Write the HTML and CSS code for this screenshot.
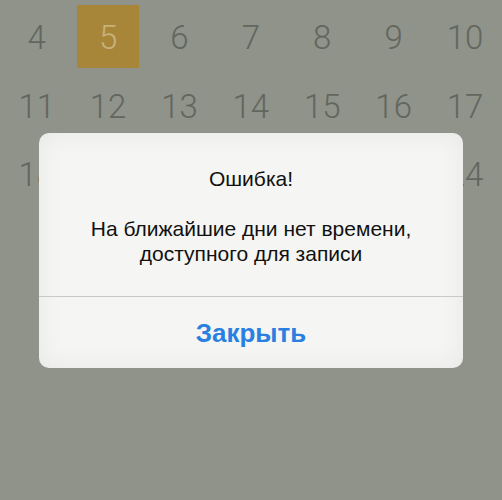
FILE: index.html
```html
<!DOCTYPE html>
<html lang="ru">
<head>
<meta charset="utf-8">
<title>Календарь</title>
<link rel="stylesheet" href="styles.css">
</head>
<body>
<div class="screen">
  <div class="calendar">
    <div class="day">4</div>
    <div class="day selected">5</div>
    <div class="day">6</div>
    <div class="day">7</div>
    <div class="day">8</div>
    <div class="day">9</div>
    <div class="day">10</div>
    <div class="day">11</div>
    <div class="day">12</div>
    <div class="day">13</div>
    <div class="day">14</div>
    <div class="day">15</div>
    <div class="day">16</div>
    <div class="day">17</div>
    <div class="day">18</div>
    <div class="day">19</div>
    <div class="day">20</div>
    <div class="day">21</div>
    <div class="day">22</div>
    <div class="day">23</div>
    <div class="day">24</div>
  </div>
  <div class="alert">
    <div class="alert-body">
      <div class="alert-title">Ошибка!</div>
      <div class="alert-message">На ближайшие дни нет времени,<br>доступного для записи</div>
    </div>
    <div class="alert-button">Закрыть</div>
  </div>
</div>
</body>
</html>
```

FILE: styles.css
```css
html, body {
  margin: 0;
  padding: 0;
}
body {
  background: #8f9389;
  width: 502px;
  height: 500px;
  overflow: hidden;
  font-family: "Liberation Sans", Arial, sans-serif;
}
.screen {
  position: relative;
  width: 502px;
  height: 500px;
}
.calendar {
  display: grid;
  grid-template-columns: repeat(7, 71.4px);
  grid-auto-rows: 68.5px;
  padding: 5px 0 0 1px;
}
.day {
  font-family: Roboto, "Open Sans", sans-serif;
  font-weight: 300;
  font-size: 33px;
  color: #62665f;
  display: flex;
  justify-content: center;
  align-items: flex-start;
  padding-top: 14px;
  box-sizing: border-box;
  height: 63px;
  width: 62px;
  margin: 0 auto;
  line-height: 38px;
}
.selected {
  background: #a88639;
  color: #c8b27c;
}
.alert {
  position: absolute;
  left: 39px;
  top: 133px;
  width: 424px;
  height: 235px;
  border-radius: 10px;
  background: #f5f5f3;
  box-shadow: inset 0 0 26px rgba(0, 0, 0, 0.06);
  display: flex;
  flex-direction: column;
  text-align: center;
  color: #111;
}
.alert-body {
  padding: 33px 10px 0;
  height: 164px;
  box-sizing: border-box;
  border-bottom: 1px solid #c9c9c6;
}
.alert-title {
  font-size: 21px;
  line-height: 25px;
}
.alert-message {
  margin-top: 25px;
  font-size: 21px;
  line-height: 25px;
}
.alert-button {
  flex: 1;
  display: flex;
  align-items: center;
  justify-content: center;
  font-size: 26px;
  font-weight: bold;
  color: #2a7fe0;
  padding-top: 2px;
}
```
